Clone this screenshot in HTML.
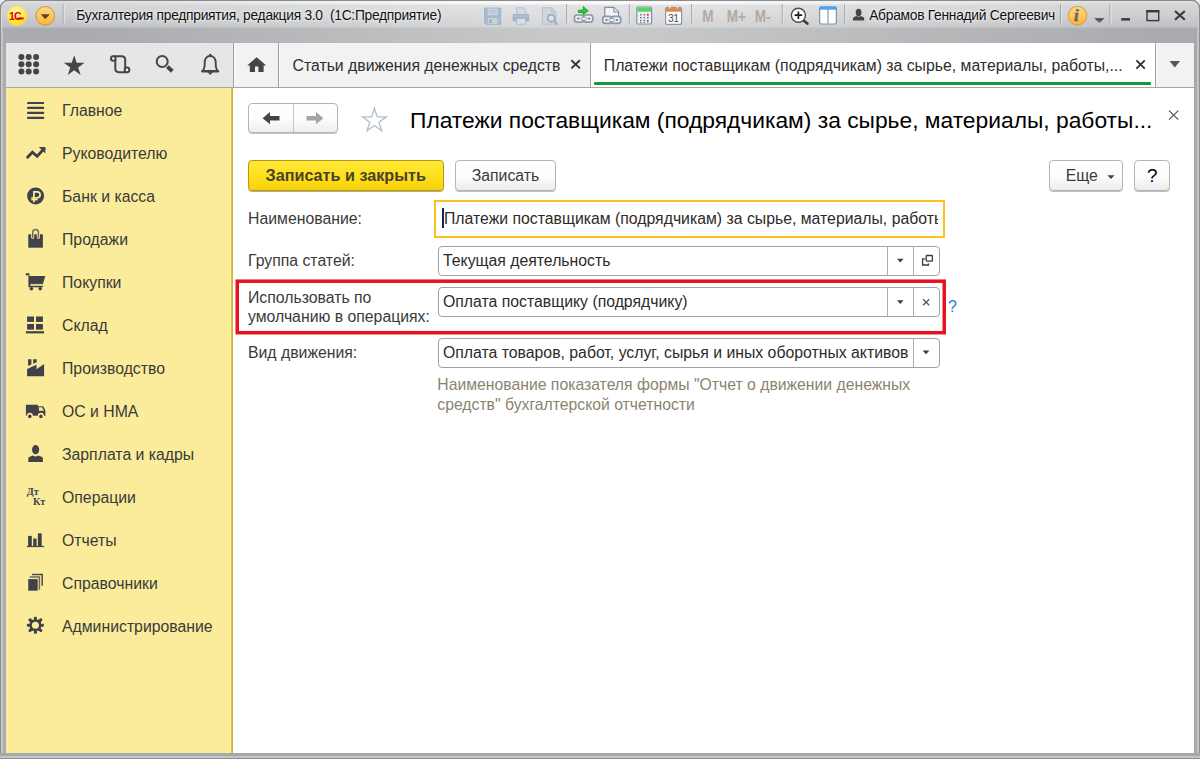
<!DOCTYPE html>
<html lang="ru">
<head>
<meta charset="utf-8">
<title>Бухгалтерия предприятия, редакция 3.0 (1С:Предприятие)</title>
<style>
*{box-sizing:border-box;margin:0;padding:0}
html,body{width:1200px;height:759px;overflow:hidden;background:#fff}
body{font-family:"Liberation Sans",sans-serif;color:#333;position:relative}
#win{position:absolute;left:0;top:0;width:1200px;height:759px;background:#a8aaae;overflow:hidden}
#titlebar{position:absolute;left:0;top:0;width:1200px;height:43px;
 background:linear-gradient(#8a8a8a 0px,#8a8a8a 1px,rgba(138,138,138,0) 1px),
 linear-gradient(90deg,rgba(255,255,255,0) 0,rgba(255,255,255,0) 7%,rgba(255,255,255,.75) 42%,rgba(255,255,255,.75) 55%,rgba(255,255,255,0) 95%) 0 1px/100% 3.5px no-repeat,
 linear-gradient(90deg,rgba(255,255,255,0) 0,rgba(255,255,255,0) 7%,rgba(255,255,255,.34) 45%,rgba(255,255,255,.34) 55%,rgba(255,255,255,0) 96%),
 linear-gradient(#dedede 0px,#dedede 2px,#d5d6d8 4px,#cecfd1 14px,#c0c1c4 27px,#adafb2 28px,#a9abae 30px,#a9abae 43px)}
#bl{position:absolute;left:0;top:28px;width:6px;height:731px;background:linear-gradient(90deg,#8c8c8c 0,#8c8c8c 1px,#c9c9c9 1px,#c4c4c6 3px,#a9abb0 3.5px,#a9abb0 6px)}
#br{position:absolute;left:1194px;top:28px;width:6px;height:731px;background:linear-gradient(90deg,#a6a7aa 0,#a9aaad 3px,#c4c4c6 3.5px,#c9c9c9 5px,#8c8c8c 5px,#8c8c8c 6px)}
#bb{position:absolute;left:0;top:753px;width:1200px;height:6px;background:linear-gradient(#a6a7ab 0,#a9aaae 3px,#c4c4c6 3.5px,#c9c9c9 4.7px,#8c8c8c 4.7px,#8c8c8c 6px)}
#toolbar{position:absolute;left:6px;top:43px;width:1188px;height:45px;background:#e6e6e6;border-bottom:1px solid #a6a6a8}
#side{position:absolute;left:6px;top:88px;width:227px;height:665px;background:#fbec9c}
#side .e1{position:absolute;right:2px;top:0;width:1px;height:100%;background:#fdf3ab}
#side .e2{position:absolute;right:0;top:0;width:2px;height:100%;background:linear-gradient(90deg,#dcc547,#cbb02f)}
#main{position:absolute;left:233px;top:88px;width:961px;height:665px;background:#fff}
.nav{position:absolute;left:56px;font-size:15.8px;color:#3a3a3a;white-space:nowrap;line-height:20px}
.t{position:absolute;white-space:nowrap;line-height:20px}
.navgrp{position:absolute;left:15px;top:15px;width:90px;height:30px;border:1px solid #b4b4b4;border-radius:4px;background:linear-gradient(#fff 0,#fdfdfd 50%,#eee 100%);box-shadow:0 1px 0 rgba(0,0,0,.22)}
.navgrp .nb{position:absolute;top:0;height:100%}
.navgrp .nb.l{left:0;width:45px;border-right:1px solid #c6c6c6}
.title{left:177px;top:18px;font-size:22.8px;line-height:28px;color:#000}
.btn{position:absolute;height:31px;border:1px solid #b4b4b4;border-radius:4px;background:linear-gradient(#fff 0,#fcfcfc 55%,#ececec 100%);box-shadow:0 1px 0 rgba(0,0,0,.25);text-align:center;font-size:15.8px;line-height:29px;color:#3a3a3a;white-space:nowrap}
.ybtn{border-color:#b7990c;background:linear-gradient(#ffe83a 0,#ffe01e 50%,#f7d20a 100%);font-weight:bold;font-size:16.2px;color:#4a4128;box-shadow:0 1px 0 rgba(90,70,0,.45)}
.qb{font-size:18.8px;color:#000;line-height:30px}
.lbl{font-size:15.8px;color:#3a3a3a}
.namefld{position:absolute;left:201px;top:112px;width:511px;height:38px;border:2px solid #fbc21d;background:#fff;overflow:hidden}
.namefld .ft{position:absolute;white-space:nowrap;font-size:15.8px;line-height:20px;color:#2b2b2b;width:494px;overflow:hidden}
.cur{position:absolute;left:6.4px;top:6px;width:1.2px;height:20px;background:#23234a}
.fld{position:absolute;left:204.5px;width:502.5px;height:30px;border:1px solid #a1a1a1;border-radius:4px;background:#fff;overflow:hidden}
.fld .ft{position:absolute;left:4.5px;top:4.2px;white-space:nowrap;font-size:15.8px;line-height:20px;color:#2b2b2b}
.fld .dv{position:absolute;top:0;width:1px;height:100%;background:#adadad}
.qm{font-size:16px;color:#237fc8}
.hint{font-size:15.75px;line-height:19.3px;color:#8b836f}
.tab{position:absolute;top:0;height:44px;background:#f2f2f2;border-left:1px solid #9f9f9f;box-shadow:inset 1px 0 0 #fafafa}
.tab.act{background:#fff;box-shadow:none}
.tab .tt{position:absolute;top:13.4px;font-size:15.8px;line-height:20px;color:#2e2e2e;white-space:nowrap}
.tab .gl{position:absolute;left:3.3px;right:4.3px;top:39.4px;height:2.3px;background:#109a3b;border-radius:1px}
.tbt{font-size:13.8px;letter-spacing:-.27px;line-height:20px;color:#111;text-shadow:0 0 3px rgba(255,255,255,.9),0 0 6px rgba(255,255,255,.7)}
.mm{top:6.6px;font-size:13.6px;font-weight:bold;line-height:20px;color:#b6a89d;transform:scaleY(1.18);transform-origin:0 50%}
</style>
</head>
<body>
<div id="win">
  <div id="titlebar">
        <div class="t tbt" style="left:76.3px;top:5.5px">Бухгалтерия предприятия, редакция 3.0&nbsp; (1С:Предприятие)</div>
    <div class="t mm" style="left:702.3px">M</div><div class="t mm" style="left:726.8px">M+</div><div class="t mm" style="left:754.8px">M-</div>
    <div class="t tbt" style="left:869.2px;top:5.5px">Абрамов Геннадий Сергеевич</div>
    <svg style="position:absolute;left:0;top:0" width="1200" height="43" viewBox="0 0 1200 43">
      <defs>
        <radialGradient id="g1c" cx=".45" cy=".3" r=".75"><stop offset="0" stop-color="#fffbc0"/><stop offset=".55" stop-color="#ffee4a"/><stop offset="1" stop-color="#ffd800"/></radialGradient>
        <linearGradient id="gor" x1="0" y1="0" x2="0" y2="1"><stop offset="0" stop-color="#ffd98a"/><stop offset="1" stop-color="#ffb338"/></linearGradient>
        <linearGradient id="gtri" x1="0" y1="0" x2="0" y2="1"><stop offset="0" stop-color="#3a3a3a"/><stop offset="1" stop-color="#8a8a8a"/></linearGradient>
      </defs>
      <!-- logo -->
      <circle cx="17" cy="15.8" r="9.7" fill="url(#g1c)" stroke="#f3e27a" stroke-width=".6"/>
      <text x="8.9" y="19.6" font-family="Liberation Sans, sans-serif" font-weight="bold" font-size="10.6" fill="#e60000" letter-spacing="-.9">1С</text>
      <rect x="17.2" y="17.5" width="6.6" height="1.9" rx=".8" fill="#e60000"/>
      <!-- menu button -->
      <circle cx="45.3" cy="15.8" r="9.3" fill="url(#gor)" stroke="#c9982f" stroke-width="1"/>
      <path d="M40.8 14.2 H49.8 L45.3 19.2 Z" fill="#5a4420"/>
      <g stroke="#9a9b9e" stroke-width="1"><path d="M63.2 4 V23.5 M566.8 4 V23.5 M629.3 4 V23.5 M691.8 4 V23.5 M782.3 4 V23.5 M844.8 4 V23.5 M1060.6 4 V23.5 M1110 4 V23.5"/></g>
      <g stroke="#e9e9ea" stroke-width="1"><path d="M64.2 4 V23.5 M567.8 4 V23.5 M630.3 4 V23.5 M692.8 4 V23.5 M783.3 4 V23.5 M845.8 4 V23.5 M1061.6 4 V23.5 M1111 4 V23.5"/></g>
      <!-- save (disabled) -->
      <g>
        <path d="M484.5 8 H500.8 V24.4 H486.2 L484.5 22.7 Z" fill="#a8b9d0" stroke="#9eb0c8" stroke-width=".8"/>
        <rect x="487.6" y="8.6" width="10" height="6.6" fill="#c9d2df"/><path d="M489 10.6 H496.2 M489 12.8 H496.2" stroke="#aebdd2" stroke-width=".9"/>
        <rect x="488" y="18" width="9.4" height="6" fill="#c5d6cf"/><rect x="489.6" y="19.4" width="1.8" height="3.8" fill="#8fa6c6"/>
      </g>
      <!-- print (disabled) -->
      <g>
        <path d="M516.6 7.8 H523.4 L526 10.6 V15 H516.6 Z" fill="#d5d8de" stroke="#a9bdd6" stroke-width=".9"/>
        <rect x="512.6" y="14" width="16.6" height="7.4" rx="1.6" fill="#a0b2ca"/>
        <path d="M513.6 16.1 H528.2" stroke="#c6d2e2" stroke-width=".8"/>
        <rect x="516.6" y="18.4" width="8.8" height="5.8" fill="#dcdde1" stroke="#a9bdd6" stroke-width=".9"/>
      </g>
      <!-- preview (disabled) -->
      <g>
        <path d="M542.4 7.8 H551.6 L555.8 12 V24.2 H542.4 Z" fill="#d3d5da" stroke="#a9bdd6" stroke-width=".9"/>
        <path d="M551.6 7.8 V12 H555.8" fill="none" stroke="#a9bdd6" stroke-width=".8"/>
        <circle cx="551.2" cy="18.2" r="3.5" fill="#dfe2e6" stroke="#97abc5" stroke-width="1.7"/>
        <path d="M553.9 20.9 L557.6 24.6" stroke="#97abc5" stroke-width="2"/>
      </g>
      <!-- get link -->
      <g>
        <path d="M578.4 10.2 L583.2 10.2 L583.2 6.6 L588.2 10.9 L583.2 14.6 L583.2 12.4 L578.4 12.4 Z" fill="#26d12c" stroke="#13a019" stroke-width=".9" stroke-linejoin="round"/>
        <rect x="574.4" y="15" width="9.4" height="7.2" rx="2.6" fill="#eef0f3" stroke="#8d98a8" stroke-width="1.7"/>
        <rect x="583.4" y="15" width="9.4" height="7.2" rx="2.6" fill="#eef0f3" stroke="#8d98a8" stroke-width="1.7"/>
        <rect x="581" y="17.2" width="5.4" height="2.8" rx="1" fill="#f4f5f7" stroke="#8d98a8" stroke-width=".9"/>
        <rect x="576.9" y="17.6" width="2.6" height="2" rx=".8" fill="#7b8594"/><rect x="587.8" y="17.6" width="2.6" height="2" rx=".8" fill="#7b8594"/>
      </g>
      <!-- go to link -->
      <g>
        <path d="M604.8 7.4 H613.8 L618.6 12 V20 H604.8 Z" fill="#f3f4f6" stroke="#7f8da3" stroke-width="1.2"/>
        <path d="M613.8 7.4 V12 H618.6" fill="#dfe4ec" stroke="#7f8da3" stroke-width="1"/>
        <rect x="602.7" y="16.4" width="9.4" height="7" rx="2.6" fill="#eef0f3" stroke="#8d98a8" stroke-width="1.7"/>
        <rect x="611.3" y="16.4" width="9.4" height="7" rx="2.6" fill="#eef0f3" stroke="#8d98a8" stroke-width="1.7"/>
        <rect x="609" y="18.5" width="5.4" height="2.8" rx="1" fill="#f4f5f7" stroke="#8d98a8" stroke-width=".9"/>
        <rect x="605.2" y="18.9" width="2.6" height="2" rx=".8" fill="#7b8594"/><rect x="615.6" y="18.9" width="2.6" height="2" rx=".8" fill="#7b8594"/>
      </g>
      <!-- calculator -->
      <g>
        <rect x="636.8" y="7" width="14.8" height="17" rx="1.6" fill="#eef2f6" stroke="#8193a8" stroke-width="1.2"/>
        <path d="M637.4 8.6 Q637.4 7.6 638.4 7.6 H650 Q651 7.6 651 8.6 V11.8 H637.4 Z" fill="#55d660"/>
        <g fill="#6d7885"><rect x="640" y="14" width="1.6" height="1.5"/><rect x="643.5" y="14" width="1.6" height="1.5"/><rect x="640" y="16.9" width="1.6" height="1.5"/><rect x="643.5" y="16.9" width="1.6" height="1.5"/><rect x="647" y="16.9" width="1.6" height="1.5"/><rect x="640" y="19.8" width="1.6" height="1.5"/><rect x="643.5" y="19.8" width="1.6" height="1.5"/><rect x="647" y="19.8" width="1.6" height="2.6"/><rect x="640" y="21.9" width="1.6" height="1"/><rect x="643.5" y="21.9" width="1.6" height="1"/></g>
        <rect x="646.9" y="13.6" width="1.8" height="2.2" fill="#f0353a"/>
      </g>
      <!-- calendar -->
      <g>
        <rect x="665.6" y="7.4" width="16" height="17" rx="2" fill="#fbfcfd" stroke="#8a99ab" stroke-width="1.2"/>
        <path d="M665.6 11.8 V9.4 Q665.6 7.2 667.8 7.2 H679.4 Q681.6 7.2 681.6 9.4 V11.8 Z" fill="#d98a4f"/>
        <rect x="669" y="6" width="1.6" height="2.6" rx=".6" fill="#f3e4d6"/><rect x="676.6" y="6" width="1.6" height="2.6" rx=".6" fill="#f3e4d6"/>
        <text x="667.9" y="21.6" font-family="Liberation Sans, sans-serif" font-size="10.4" fill="#4c5058" letter-spacing="-.5">31</text>
      </g>
      <!-- zoom -->
      <g>
        <path d="M803 20 L807.4 23.6" stroke="#3b3b3b" stroke-width="2.6" stroke-linecap="round"/>
        <circle cx="798.4" cy="15.2" r="7" fill="#fff" stroke="#4a4a4a" stroke-width="1.4"/>
        <path d="M794.6 15.2 H802.2 M798.4 11.4 V19" stroke="#1e1e1e" stroke-width="1.7"/>
      </g>
      <!-- panels -->
      <g>
        <rect x="819.6" y="6.8" width="16.8" height="17.2" rx="1.8" fill="#fff" stroke="#7d94ad" stroke-width="1.2"/>
        <path d="M819.6 9.8 V8.6 Q819.6 6.4 821.8 6.4 H834.2 Q836.4 6.4 836.4 8.6 V9.8 Z" fill="#49a6f2"/>
        <path d="M828 9.8 V23.6" stroke="#8aa0b8" stroke-width="1.3"/>
      </g>
      <!-- user -->
      <g fill="#444">
        <ellipse cx="858.6" cy="12.4" rx="2.9" ry="3.7"/>
        <path d="M853 20.6 V18.6 Q853 17.2 854.6 16.8 L857 16 Q858.6 17.3 860.2 16 L862.6 16.8 Q864.2 17.2 864.2 18.6 V20.6 Z"/>
      </g>
      <!-- info -->
      <circle cx="1077.5" cy="15.6" r="9.3" fill="url(#gor)" stroke="#d4a83c" stroke-width="1.1"/>
      <text x="1073.9" y="21.4" font-family="Liberation Serif, serif" font-weight="bold" font-style="italic" font-size="17" fill="#666" stroke="#666" stroke-width=".5">i</text>
      <path d="M1094.4 18.2 H1104.4 L1099.4 23.2 Z" fill="url(#gtri)"/>
      <!-- window buttons -->
      <rect x="1121.2" y="18.1" width="8.8" height="2.5" fill="#3a3a3a"/>
      <rect x="1147" y="11.4" width="11.7" height="9.2" fill="none" stroke="#3a3a3a" stroke-width="1.4"/><rect x="1146.3" y="10" width="13.1" height="2.4" fill="#3a3a3a"/>
      <path d="M1175 11 L1184.8 19.8 M1184.8 11 L1175 19.8" stroke="#3a3a3a" stroke-width="2.2" fill="none"/>
    </svg>
  </div>
  <div id="toolbar">
    <div class="tab home" style="left:227px;width:45px"></div>
    <div class="tab" style="left:272px;width:312px"><span class="tt" style="left:13.5px">Статьи движения денежных средств</span></div>
    <div class="tab act" style="left:584px;width:565px"><span class="tt" style="left:12.8px">Платежи поставщикам (подрядчикам) за сырье, материалы, работы,...</span><i class="gl"></i></div>
    <div class="tab dd" style="left:1149px;width:39px"></div>
  </div>
  <div id="side"><div class="e1"></div><div class="e2"></div>
    <div class="nav" style="top:13px">Главное</div>
    <div class="nav" style="top:56px">Руководителю</div>
    <div class="nav" style="top:99px">Банк и касса</div>
    <div class="nav" style="top:142px">Продажи</div>
    <div class="nav" style="top:185px">Покупки</div>
    <div class="nav" style="top:228px">Склад</div>
    <div class="nav" style="top:271px">Производство</div>
    <div class="nav" style="top:314px">ОС и НМА</div>
    <div class="nav" style="top:357px">Зарплата и кадры</div>
    <div class="nav" style="top:400px">Операции</div>
    <div class="nav" style="top:443px">Отчеты</div>
    <div class="nav" style="top:486px">Справочники</div>
    <div class="nav" style="top:529px">Администрирование</div>
  </div>
  <div id="main">
    <div class="navgrp"><div class="nb l"></div><div class="nb r"></div></div>
    <div class="t title">Платежи поставщикам (подрядчикам) за сырье, материалы, работы...</div>
    <div class="btn ybtn" style="left:15px;top:71.5px;width:195.5px"><span>Записать и закрыть</span></div>
    <div class="btn" style="left:222.3px;top:71.5px;width:100.4px"><span>Записать</span></div>
    <div class="btn" style="left:815.5px;top:71.5px;width:74px;padding-right:7.5px"><span>Еще</span></div>
    <div class="btn qb" style="left:901.3px;top:71.5px;width:36px"><span>?</span></div>

    <div class="t lbl" style="left:15px;top:120.8px">Наименование:</div>
    <div class="namefld"><div class="cur"></div><div class="ft" style="left:8px;top:6.6px">Платежи поставщикам (подрядчикам) за сырье, материалы, работы, услуги</div></div>

    <div class="t lbl" style="left:15px;top:162.7px">Группа статей:</div>
    <div class="fld" style="top:157.5px"><div class="ft">Текущая деятельность</div><i class="dv" style="left:448.6px"></i><i class="dv" style="left:474.4px"></i></div>

    <div class="t lbl" style="left:15px;top:199.6px;line-height:19.7px">Использовать по<br>умолчанию в операциях:</div>
    <div class="fld" style="top:199px"><div class="ft">Оплата поставщику (подрядчику)</div><i class="dv" style="left:448.6px"></i><i class="dv" style="left:474.4px"></i></div>
    <div class="t qm" style="left:715px;top:209.4px">?</div>

    <div class="t lbl" style="left:15px;top:254.9px">Вид движения:</div>
    <div class="fld" style="top:249.6px"><div class="ft">Оплата товаров, работ, услуг, сырья и иных оборотных активов</div><i class="dv" style="left:474.4px"></i></div>

    <div class="t hint" style="left:204.3px;top:287.3px">Наименование показателя формы "Отчет о движении денежных<br>средств" бухгалтерской отчетности</div>

  </div>
  <div style="position:absolute;left:0;top:0;width:2px;height:28px;background:linear-gradient(90deg,#8c8c8c 1px,#dcdcdd 1px)"></div><div style="position:absolute;left:1198px;top:0;width:2px;height:28px;background:linear-gradient(90deg,#d0d0d2 1px,#8c8c8c 1px)"></div><div id="bl"></div><div id="br"></div><div id="bb"></div>
<svg id="sideicons" style="position:absolute;left:0;top:0" width="240" height="759" viewBox="0 0 240 759" fill="#404149">
  <!-- Главное -->
  <g><rect x="27.1" y="101.9" width="17" height="2.2" rx=".6"/><rect x="27.1" y="106.85" width="17" height="2.2" rx=".6"/><rect x="27.1" y="111.8" width="17" height="2.2" rx=".6"/><rect x="27.1" y="116.7" width="17" height="2.2" rx=".6"/></g>
  <!-- Руководителю -->
  <g fill="none" stroke="#3b3c45" stroke-width="2.8" stroke-linejoin="miter" stroke-linecap="round"><path d="M27.6 157.3 L32.4 152.3 L37.1 156.4 L44 148.8"/></g>
  <path d="M38.8 146.9 H45.4 V153.4 Z"/>
  <!-- Банк и касса -->
  <circle cx="35.6" cy="196" r="8.5"/>
  <g fill="none" stroke="#fbec9c" stroke-width="1.7"><path d="M33.9 202.2 V191.9 H37.2 A2.95 2.95 0 0 1 37.2 197.8 H31.3"/><path d="M31.3 199.7 H37.6" stroke-width="1.4"/></g>
  <!-- Продажи -->
  <rect x="28.3" y="234.3" width="14.6" height="13.4"/>
  <path d="M32.7 237.2 V232.4 A2.85 2.85 0 0 1 38.4 232.4 V237.2" fill="none" stroke="#fbec9c" stroke-width="3.2" stroke-linecap="round"/>
  <path d="M32.7 237.2 V232.4 A2.85 2.85 0 0 1 38.4 232.4 V237.2" fill="none" stroke="#6d6a58" stroke-width="1.5" stroke-linecap="round"/>
  <!-- Покупки -->
  <path d="M25.7 273.3 H29.4 V275.9 H45.3 L42.9 283.9 H30.6 V285.8 H42.9 V287.2 H28.4 V275.2 H25.7 Z"/>
  <rect x="30.6" y="283.9" width="12" height="1.9" fill="#d9cd8a"/>
  <circle cx="31.4" cy="288.7" r="1.8"/><circle cx="40.2" cy="288.7" r="1.8"/>
  <!-- Склад -->
  <rect x="27.1" y="316.5" width="6.9" height="5.4"/><rect x="36" y="316.5" width="6.9" height="5.4"/>
  <rect x="27.1" y="324" width="6.9" height="5.6"/><rect x="36" y="324" width="6.9" height="5.6"/>
  <rect x="25.9" y="331.2" width="18.2" height="2.2"/>
  <!-- Производство -->
  <path d="M27.1 376.3 V369 L36.5 364.7 V369.3 L44.1 363.9 V376.3 Z"/>
  <path d="M28.1 359.3 H31.4 V364.5 L28.1 366 Z"/><path d="M33.2 359.3 H36.7 V362.3 L33.2 363.7 Z"/>
  <!-- ОС и НМА -->
  <path d="M25.9 404.7 H37.9 V406.3 H42.3 Q43.3 406.3 43.8 407.3 L45.4 410.6 V415.8 H44 A3.1 3.1 0 0 0 37.8 415.8 H32.9 A3.1 3.1 0 0 0 26.7 415.8 H25.9 Z"/>
  <path d="M38.9 407.2 H41.9 L44 410.8 H38.9 Z" fill="#fbec9c"/>
  <circle cx="29.8" cy="416.4" r="1.8"/><circle cx="40.9" cy="416.4" r="1.8"/>
  <!-- Зарплата и кадры -->
  <ellipse cx="35.6" cy="449.7" rx="3.6" ry="4.6"/>
  <path d="M28.3 462.1 V458.6 Q28.3 456.9 30.3 456.4 L33 455.4 Q35.6 457.4 38.2 455.4 L40.9 456.4 Q42.9 456.9 42.9 458.6 V462.1 Q42.9 462.1 41.9 462.1 H29.3 Q28.3 462.1 28.3 462.1Z"/>
  <!-- Операции -->
  <g font-family="Liberation Serif, serif" font-weight="bold" font-size="10.2px"><text x="26.8" y="494.9">Дт</text><text x="33" y="504.9">Кт</text></g>
  <!-- Отчеты -->
  <rect x="28.1" y="535.9" width="3.7" height="10.6"/><rect x="33.2" y="538.5" width="3.4" height="8"/><rect x="37.9" y="533.3" width="3.8" height="13.2"/><rect x="26.9" y="545.9" width="17.2" height="1.2"/>
  <!-- Справочники -->
  <rect x="28.25" y="579.1" width="9.45" height="11.6"/>
  <path d="M29.6 576.9 H39.4 V589.7" fill="none" stroke="#6d6a58" stroke-width="1.5"/>
  <path d="M32 574.6 H42.2 V585.8" fill="none" stroke="#4a4a50" stroke-width="1.5"/>
  <!-- Администрирование -->
  <g transform="translate(35.4 625.2)">
    <rect x="-5.5" y="-5.5" width="11" height="11" rx="2.6"/>
    <rect x="-1.5" y="-8.5" width="3" height="17" rx=".8"/><rect x="-8.5" y="-1.5" width="17" height="3" rx=".8"/>
    <g transform="rotate(45)"><rect x="-1.5" y="-9.1" width="3" height="18.2" rx="1.2"/><rect x="-9.1" y="-1.5" width="18.2" height="3" rx="1.2"/></g>
    <circle r="3.5" fill="#fbec9c"/>
  </g>
</svg>

<svg id="ov2" style="position:absolute;left:0;top:0" width="1200" height="759" viewBox="0 0 1200 759">
  <!-- toolbar: sections grid -->
  <g fill="#454545">
    <circle cx="21.4" cy="56.9" r="3"/><circle cx="28.7" cy="56.9" r="3"/><circle cx="36.1" cy="56.9" r="3"/>
    <circle cx="21.4" cy="64.3" r="3"/><circle cx="28.7" cy="64.3" r="3"/><circle cx="36.1" cy="64.3" r="3"/>
    <circle cx="21.4" cy="71.6" r="3"/><circle cx="28.7" cy="71.6" r="3"/><circle cx="36.1" cy="71.6" r="3"/>
  </g>
  <!-- favourites star -->
  <path id="star1" fill="#454545" d="M74.2 55.3 L76.65 62.83 L84.57 62.83 L78.16 67.49 L80.61 75.02 L74.2 70.36 L67.79 75.02 L70.24 67.49 L63.83 62.83 L71.75 62.83 Z"/>
  <!-- history scroll -->
  <g fill="none" stroke="#454545" stroke-width="2">
    <path d="M113.4 56.2 H121.6 Q125.2 56.2 125.2 59.8 V68.2"/>
    <path d="M115.3 59.4 V68.6 Q115.3 72.2 118.9 72.2 H126.8"/>
    <circle cx="113.3" cy="58.5" r="2.3" fill="#f6f6f6"/>
    <circle cx="127" cy="69.9" r="2.3" fill="#f6f6f6"/>
  </g>
  <!-- search -->
  <circle cx="162.2" cy="61.5" r="5.5" fill="none" stroke="#454545" stroke-width="2"/>
  <path d="M167.4 66.6 L172.3 71.2" stroke="#454545" stroke-width="4" fill="none"/>
  <!-- bell -->
  <g fill="none" stroke="#454545" stroke-width="1.9" stroke-linejoin="round">
    <path d="M202.6 71 C204.9 69 204.7 66 204.7 62.6 C204.7 58.6 206.9 56 210.2 56 C213.5 56 215.7 58.6 215.7 62.6 C215.7 66 215.5 69 217.8 71 Z"/>
  </g>
  <circle cx="210.2" cy="54.9" r="1.2" fill="#454545"/><rect x="201.3" y="70" width="17.8" height="2.4" rx="1.2" fill="#454545"/>
  <path d="M207.4 72.2 H213 L210.2 74.9 Z" fill="#454545"/>
  <!-- home -->
  <path fill="#454545" d="M256.7 57.2 L266.2 65.6 H263.6 V72 H258.4 V66.6 H255 V72 H249.8 V65.6 H247.2 Z"/>
  <!-- tab close -->
  <g stroke="#333" stroke-width="1.9" fill="none"><path d="M571.4 60.2 L579.9 68.4 M579.9 60.2 L571.4 68.4"/><path d="M1136.4 60.4 L1144.8 68.6 M1144.8 60.4 L1136.4 68.6"/></g>
  <path d="M1169.5 61 H1180.1 L1174.8 67.4 Z" fill="#585858"/>
  <!-- nav arrows -->
  <path fill="#444" d="M262.6 118.2 L270 112.1 V116.1 H279.5 V120.4 H270 V124.3 Z"/>
  <path fill="#a5a5a5" d="M323.4 118.2 L316 112.1 V116.1 H306.5 V120.4 H316 V124.3 Z"/>
  <!-- fav star outline -->
  <path fill="none" stroke="#b5bdc6" stroke-width="1.3" stroke-linejoin="miter" d="M374.40 108.20 L377.21 116.84 L386.29 116.84 L378.94 122.18 L381.75 130.81 L374.40 125.48 L367.05 130.81 L369.86 122.18 L362.51 116.84 L371.59 116.84 Z"/>
  <!-- form close -->
  <path d="M1169 110.6 L1178.3 119.6 M1178.3 110.6 L1169 119.6" stroke="#555" stroke-width="1.3" fill="none"/>
  <!-- Еще triangle -->
  <path d="M1107.4 175.3 H1114.6 L1111 179 Z" fill="#444"/>
  <!-- field buttons -->
  <path d="M897 258.8 H903.6 L900.3 262.6 Z" fill="#3c3c3c"/>
  <g fill="none" stroke="#3a3a3a" stroke-width="1.3"><rect x="926.2" y="255.5" width="6.2" height="5.7" rx=".8"/><path d="M925 258.9 H922.6 V265 H928.5 V263.4"/></g>
  <path d="M897 300.3 H903.6 L900.3 304.1 Z" fill="#3c3c3c"/>
  <path d="M923.1 299.3 L929.2 305.3 M929.2 299.3 L923.1 305.3" stroke="#555" stroke-width="1.2" fill="none"/>
  <path d="M922.7 350.4 H929.3 L926 354.2 Z" fill="#3c3c3c"/>
  <!-- highlight frame -->
  <rect x="237.25" y="281.2" width="707" height="51.5" fill="none" stroke="#e8111f" stroke-width="3.5"/>
</svg>

<svg style="position:absolute;left:0;top:0" width="1200" height="10" viewBox="0 0 1200 10">
    <path d="M0 0 H7.5 A7.5 7.5 0 0 0 0 7.5 Z" fill="#e7ebf8"/><path d="M.5 8 A7.5 7.5 0 0 1 8 .5" fill="none" stroke="#8a8a8a" stroke-width="1.2"/>
    <path d="M1200 0 H1192.5 A7.5 7.5 0 0 1 1200 7.5 Z" fill="#e7ebf8"/><path d="M1199.5 8 A7.5 7.5 0 0 0 1192 .5" fill="none" stroke="#8a8a8a" stroke-width="1.2"/>
  </svg>
</div>
</body>
</html>
